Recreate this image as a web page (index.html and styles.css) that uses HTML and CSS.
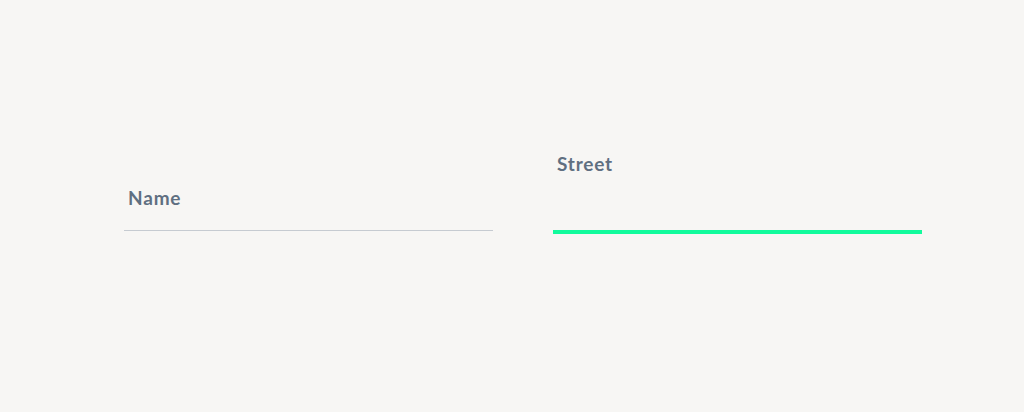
FILE: index.html
```html
<!DOCTYPE html>
<html>
<head>
<meta charset="utf-8">
<link rel="stylesheet" href="styles.css">
</head>
<body>
<div class="form">
  <div class="field">
    <label class="label label-rest">Name</label>
    <div class="spacer"></div>
    <div class="line"></div>
  </div>
  <div class="field field-active">
    <label class="label">Street</label>
    <div class="spacer"></div>
    <div class="line line-active"></div>
  </div>
</div>
</body>
</html>
```
FILE: styles.css
```css
html, body {
  margin: 0;
  padding: 0;
  background: #f7f6f4;
}
body {
  width: 1024px;
  height: 412px;
  font-family: "Lato", "Open Sans", sans-serif;
}
.form {
  display: flex;
  gap: 60px;
  padding: 150px 0 0 124px;
}
.field {
  width: 369px;
  height: 84px;
  display: flex;
  flex-direction: column;
}
.label {
  display: block;
  padding-left: 4px;
  margin-top: 3px;
  font-size: 19px;
  font-weight: 700;
  line-height: 22px;
  color: #5f6f81;
  letter-spacing: 0.8px;
}
.label-rest {
  margin-top: 37px;
}
.spacer {
  flex: 1;
}
.line {
  height: 1px;
  background: #c6cbd1;
  margin-bottom: 3px;
}
.line-active {
  height: 4px;
  background: #12fb9c;
  margin-bottom: 0;
}
```
